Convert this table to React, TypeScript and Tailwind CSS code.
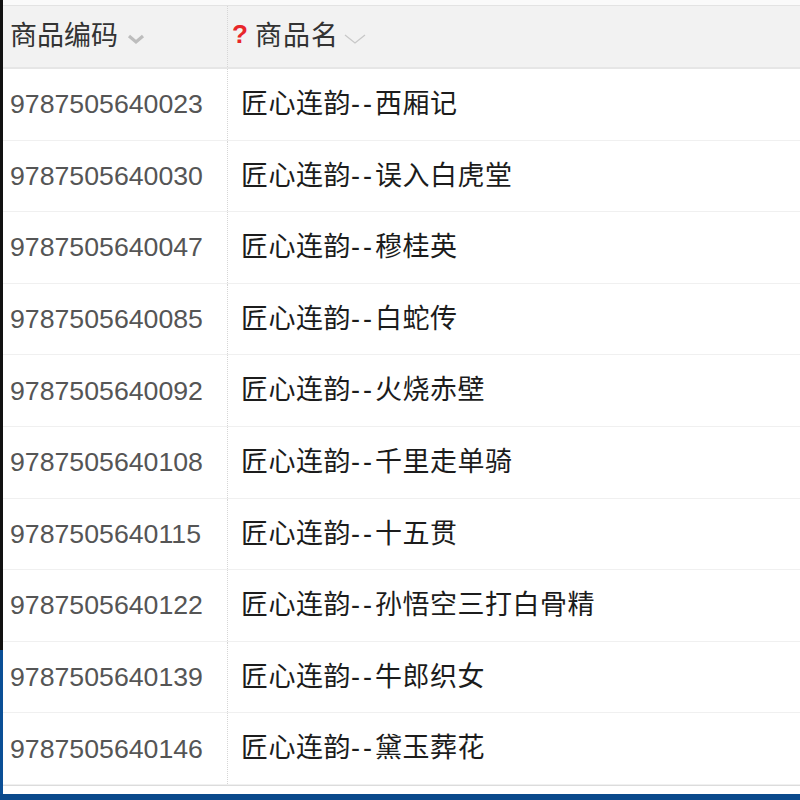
import React from 'react';

const rows = [
  ['9787505640023', '西厢记'],
  ['9787505640030', '误入白虎堂'],
  ['9787505640047', '穆桂英'],
  ['9787505640085', '白蛇传'],
  ['9787505640092', '火烧赤壁'],
  ['9787505640108', '千里走单骑'],
  ['9787505640115', '十五贯'],
  ['9787505640122', '孙悟空三打白骨精'],
  ['9787505640139', '牛郎织女'],
  ['9787505640146', '黛玉葬花'],
];

const font = { fontFamily: '"Liberation Sans", "Noto Sans CJK SC", sans-serif' };

const App: React.FC = () => {
  return (
    <div className="w-[800px] h-[800px] bg-white flex flex-col overflow-hidden" style={font}>
      <div className="flex flex-1 min-h-0">
        {/* window edge */}
        <div className="w-[3px] flex flex-col shrink-0">
          <div className="h-[650px] bg-[#111]"></div>
          <div className="flex-1 bg-[#0b4f96]"></div>
        </div>

        <div className="flex-1 flex flex-col">
          <div className="h-[6px] bg-[#fafafa] border-b border-[#e3e3e3]"></div>

          {/* header */}
          <div className="h-[63px] bg-[#f2f2f2] border-b-2 border-[#e6e6e6] flex">
            <div className="w-[225px] flex items-center pl-[7px] border-r border-dotted border-[#d6d6d6]">
              <span className="text-[27px] text-[#333]">商品编码</span>
              <svg width="20" height="14" viewBox="0 0 20 14" className="ml-[8px] mt-[4px]">
                <path d="M3 4 L10 10 L17 4" fill="none" stroke="#bdbdbd" strokeWidth="3.2" />
              </svg>
            </div>
            <div className="flex items-center pl-[4px]">
              <span className="text-[26px] font-bold text-[#e8262a] mr-[7px] -mt-[4px]">?</span>
              <span className="text-[27px] text-[#333] tracking-[1px]">商品名</span>
              <svg width="24" height="14" viewBox="0 0 24 14" className="ml-[4px] mt-[4px]">
                <path d="M2 3 L12 11 L22 3" fill="none" stroke="#c8c8c8" strokeWidth="1.3" />
              </svg>
            </div>
          </div>

          {/* rows */}
          <div className="flex flex-col">
            {rows.map(([code, name]) => (
              <div key={code} className="h-[71.6px] flex border-b border-[#f0f0f0]">
                <div className="w-[225px] flex items-center pl-[7px] border-r border-dotted border-[#d6d6d6]">
                  <span className="text-[26.7px] text-[#555]">{code}</span>
                </div>
                <div className="flex items-center pl-[13px]">
                  <span className="text-[27px] text-[#1c1c1c] tracking-[0.5px]">
                    匠心连韵<span className="tracking-[3px]">--</span>{name}
                  </span>
                </div>
              </div>
            ))}
          </div>

          <div className="flex-1 border-t border-[#dcdcdc]"></div>
        </div>
      </div>
      <div className="h-[6px] bg-[#0b4a8c] shrink-0"></div>
    </div>
  );
};

export default App;
